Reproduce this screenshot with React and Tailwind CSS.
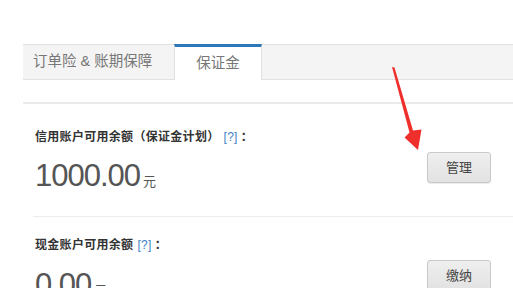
import React from 'react';

const cjk = { fontFamily: '"Liberation Sans", "Noto Sans CJK SC", sans-serif' };

const Arrow = () => (
  <svg className="absolute left-0 top-0 pointer-events-none" width="513" height="288" viewBox="0 0 513 288">
    <polygon
      points="392,67 394.5,67.5 413,130.5 421.5,129.5 418,150 404.5,137.5 409.5,132.5"
      fill="#ee2f2c"
    />
  </svg>
);

const Section = ({ label, amount, action, labelTop, amountGap, buttonTop, height }) => (
  <div className="flex pl-[12px] pr-[22px]" style={{ height }}>
    <div className="flex-1 flex flex-col" style={{ paddingTop: labelTop }}>
      <div className="flex items-center h-[16px] text-[12px] font-bold text-[#333] leading-none tracking-[0.3px]">
        <span>{label}</span>
        <span className="ml-[4px] font-normal text-[#3f7fc4]">[?]</span>
        <span className="ml-[3px]">：</span>
      </div>
      <div className="flex items-baseline h-[36px] text-[#555]" style={{ marginTop: amountGap }}>
        <span className="text-[31px] tracking-[-1px] leading-[36px]">{amount}</span>
        <span className="ml-[3px] text-[13px]">元</span>
      </div>
    </div>
    <div style={{ paddingTop: buttonTop }}>
      <button className="w-[64px] h-[31px] rounded-[3px] border border-[#c9c9c9] bg-gradient-to-b from-[#efefef] to-[#e2e2e2] text-[13px] text-[#444] shadow-[0_1px_1px_rgba(0,0,0,0.08)]">
        {action}
      </button>
    </div>
  </div>
);

export default function App() {
  return (
    <div className="relative w-[513px] h-[288px] overflow-hidden bg-white" style={cjk}>
      <div className="pt-[44px] pl-[23px]">
        {/* Tabs */}
        <div className="flex h-[36px] bg-[#f4f4f4] border-t border-b border-[#e1e1e1]">
          <div className="w-[151px] flex items-center pl-[10px] text-[14.5px] text-[#777] whitespace-nowrap">
            订单险 &amp; 账期保障
          </div>
          <div className="w-[88px] -mt-px -mb-px flex items-center justify-center bg-white border-t-[3px] border-[#2d78b8] border-x border-x-[#e1e1e1] text-[14.5px] text-[#777]">
            保证金
          </div>
          <div className="flex-1" />
        </div>

        <div className="h-[22px]" />
        <div className="h-[2px] bg-[#ebebeb]" />

        <Section
          label="信用账户可用余额（保证金计划）"
          amount="1000.00"
          action="管理"
          labelTop={25}
          amountGap={13}
          buttonTop={48}
          height={112}
        />
        <div className="ml-[10px] h-px bg-[#ececec]" />
        <Section
          label="现金账户可用余额"
          amount="0.00"
          action="缴纳"
          labelTop={20}
          amountGap={14}
          buttonTop={43}
          height={90}
        />
      </div>
      <Arrow />
    </div>
  );
}
